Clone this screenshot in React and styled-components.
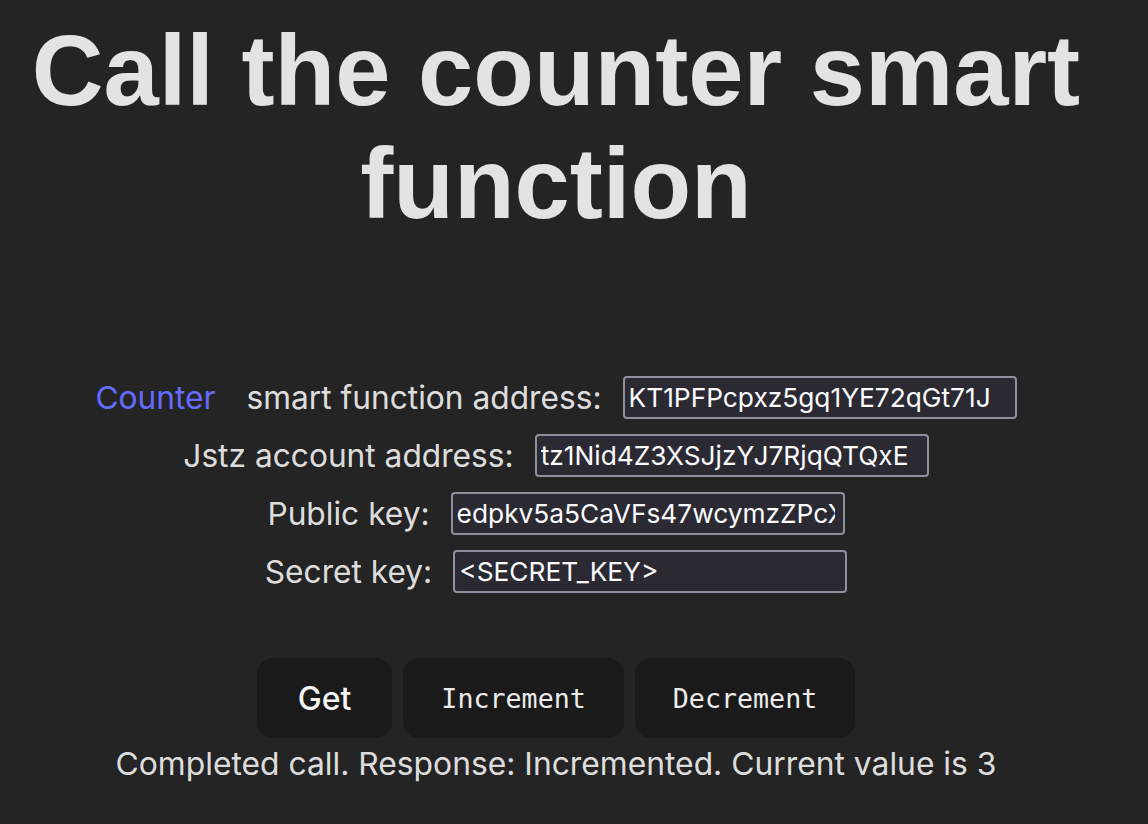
import React from "react";
import styled, { createGlobalStyle } from "styled-components";

const Global = createGlobalStyle`
  html, body { margin: 0; padding: 0; background: #242424; }
  body { min-height: 100vh; }
`;

const Page = styled.main`
  box-sizing: border-box;
  width: 1148px;
  min-height: 824px;
  padding: 15px 36px 0 0;
  text-align: center;
  color: rgba(255, 255, 255, 0.87);
  font-family: Inter, "Noto Sans", sans-serif;
`;

const Title = styled.h1`
  margin: 0;
  font-family: "Liberation Sans", Arial, sans-serif;
  font-weight: 700;
  font-size: 99.3px;
  line-height: 112.6px;
  color: #e3e3e3;
`;

const Form = styled.div`
  display: flex;
  flex-direction: column;
  align-items: center;
  gap: 15px;
  margin-top: 136px;
`;

const Row = styled.label`
  display: flex;
  align-items: center;
  justify-content: center;
  gap: 21px;
  font-size: 31.7px;
  line-height: 43px;
`;

const LabelText = styled.span`
  display: flex;
  gap: 31px;
`;

const Link = styled.a`
  color: #646cff;
  text-decoration: none;
`;

const Field = styled.input`
  box-sizing: border-box;
  width: 394px;
  height: 43px;
  padding: 0 8px 0 4px;
  border: 2px solid #8f8f9d;
  border-radius: 4px;
  background: #2b2a33;
  color: #fbfbfe;
  font-family: Inter, "Noto Sans", sans-serif;
  font-size: 26.3px;
  outline: none;
`;

const Buttons = styled.div`
  display: flex;
  justify-content: center;
  gap: 11px;
  margin-top: 65px;
`;

const Button = styled.button`
  height: 80px;
  padding: 0 ${(p) => (p.$mono ? "38px" : "41px")};
  border: none;
  border-radius: 16px;
  background: #1a1a1a;
  color: ${(p) => (p.$mono ? "#ececec" : "#f4f4f4")};
  font-family: ${(p) => (p.$mono ? '"DejaVu Sans Mono", monospace' : 'Inter, "Noto Sans", sans-serif')};
  font-size: ${(p) => (p.$mono ? "26.67px" : "32px")};
  font-weight: ${(p) => (p.$mono ? 400 : 500)};
  cursor: pointer;
`;

const Status = styled.p`
  margin: 2px 0 0;
  font-size: 31.8px;
  line-height: 48px;
`;

export default function App() {
  return (
    <>
      <Global />
      <Page>
        <Title>Call the counter smart function</Title>
        <Form>
          <Row>
            <LabelText>
              <Link href="#">Counter</Link>
              <span>smart function address:</span>
            </LabelText>
            <Field readOnly value="KT1PFPcpxz5gq1YE72qGt71J" />
          </Row>
          <Row>
            <span>Jstz account address:</span>
            <Field readOnly value="tz1Nid4Z3XSJjzYJ7RjqQTQxE" />
          </Row>
          <Row>
            <span>Public key:</span>
            <Field readOnly value="edpkv5a5CaVFs47wcymzZPcXh3rT9q" />
          </Row>
          <Row>
            <span>Secret key:</span>
            <Field readOnly value="<SECRET_KEY>" />
          </Row>
        </Form>
        <Buttons>
          <Button>Get</Button>
          <Button $mono>Increment</Button>
          <Button $mono>Decrement</Button>
        </Buttons>
        <Status>Completed call. Response: Incremented. Current value is 3</Status>
      </Page>
    </>
  );
}
